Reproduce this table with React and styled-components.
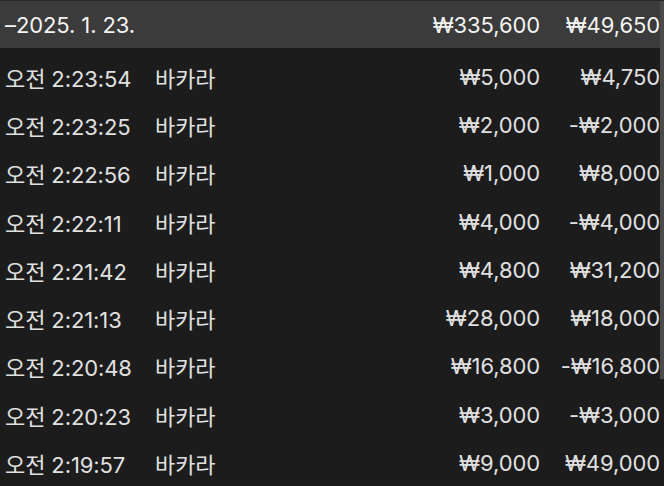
import React from "react";
import styled, { createGlobalStyle } from "styled-components";

const Global = createGlobalStyle`
  html, body { margin: 0; padding: 0; background: #1c1c1c; }
  body { font-family: Inter, "Noto Sans CJK KR", sans-serif; }
`;

const Page = styled.div`
  position: relative;
  width: 664px;
  height: 486px;
  overflow: hidden;
  background: #1c1c1c;
  border-top: 1px solid #262626;
  box-sizing: border-box;
`;

const Row = styled.div`
  display: grid;
  grid-template-columns: 150px 1fr 140px 120px;
  align-items: center;
  box-sizing: border-box;
  height: ${(p) => (p.$header ? "47px" : "48.3px")};
  padding: ${(p) => (p.$header ? "1px 4px 0 5px" : "9px 4px 0 5px")};
  background: ${(p) => (p.$header ? "#3b3b3b" : "transparent")};
  color: ${(p) => (p.$header ? "#f4f4f4" : "#e0e0e0")};
  font-size: 22px;
  letter-spacing: -0.1px;
  white-space: nowrap;
`;

const Cell = styled.span`
  text-align: ${(p) => (p.$right ? "right" : "left")};
`;

const Scrollbar = styled.div`
  position: absolute;
  top: 0;
  right: 0;
  width: 4px;
  height: 378px;
  background: #4a4a4a;
`;

const rows = [
  ["오전 2:23:54", "₩5,000", "₩4,750"],
  ["오전 2:23:25", "₩2,000", "-₩2,000"],
  ["오전 2:22:56", "₩1,000", "₩8,000"],
  ["오전 2:22:11", "₩4,000", "-₩4,000"],
  ["오전 2:21:42", "₩4,800", "₩31,200"],
  ["오전 2:21:13", "₩28,000", "₩18,000"],
  ["오전 2:20:48", "₩16,800", "-₩16,800"],
  ["오전 2:20:23", "₩3,000", "-₩3,000"],
  ["오전 2:19:57", "₩9,000", "₩49,000"],
];

export default function App() {
  return (
    <>
      <Global />
      <Page>
        <Row $header>
          <Cell>–2025. 1. 23.</Cell>
          <Cell />
          <Cell $right>₩335,600</Cell>
          <Cell $right>₩49,650</Cell>
        </Row>
        {rows.map(([t, bet, res]) => (
          <Row key={t}>
            <Cell>{t}</Cell>
            <Cell>바카라</Cell>
            <Cell $right>{bet}</Cell>
            <Cell $right>{res}</Cell>
          </Row>
        ))}
        <Scrollbar />
      </Page>
    </>
  );
}
